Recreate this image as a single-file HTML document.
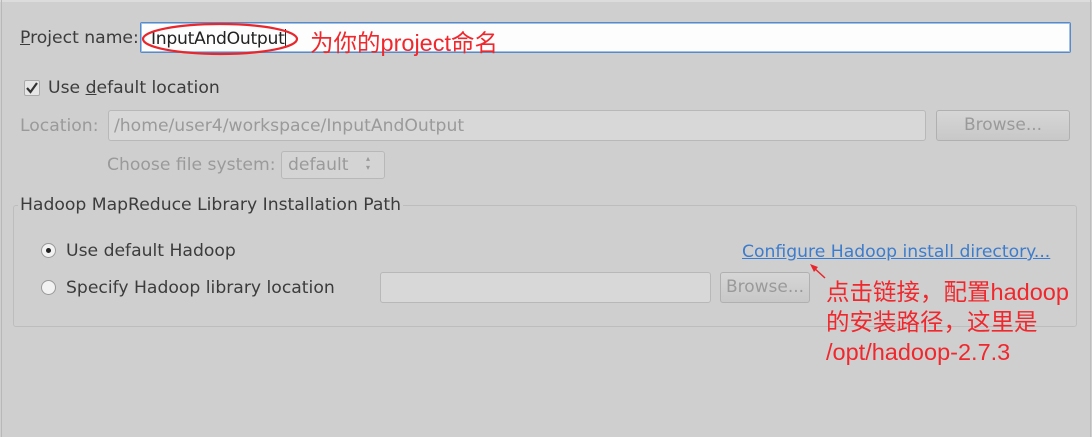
<!DOCTYPE html>
<html><head><meta charset="utf-8"><style>
*{box-sizing:border-box;margin:0;padding:0}
body{width:1092px;height:437px;background:#cfcfcf;position:relative;overflow:hidden;font-family:"DejaVu Sans","Liberation Sans",sans-serif;font-size:17.2px;color:#3c3c3c}
.a{position:absolute;white-space:nowrap;line-height:20px}
.dis{color:#9a9a9a}
.box{position:absolute;border:1px solid #b8b8b8;border-radius:3px;background:#d8d8d8}
.btn{position:absolute;border:1px solid #b0b0b0;border-radius:3px;background:linear-gradient(#d6d6d6,#c8c8c8);color:#9a9a9a;text-align:center;line-height:29px;font-size:17px}
.red{color:#f0282d;font-family:"Liberation Sans","Noto Sans CJK SC",sans-serif;font-size:23.5px;position:absolute;white-space:nowrap}
</style></head><body>
<div style="position:absolute;left:0;top:0;width:1092px;height:2px;background:#dcdcdc"></div>
<div style="position:absolute;left:1px;top:0;width:1px;height:437px;background:#b8b8b8"></div>
<div style="position:absolute;right:1px;top:0;width:1px;height:437px;background:#bdbdbd"></div>

<div class="a" style="left:20px;top:28px"><u>P</u>roject name:</div>
<div style="position:absolute;left:140px;top:22px;width:931px;height:31px;background:#fdfdfd;border:1px solid #5a8ac6;border-radius:2px;box-shadow:0 0 0 1px #9fc0e8 inset"></div>
<div class="a" style="left:151px;top:29px;color:#222;letter-spacing:-0.3px">InputAndOutput<span style="display:inline-block;width:1px;height:18px;background:#222;vertical-align:-3px"></span></div>
<svg style="position:absolute;left:140px;top:22px" width="162" height="36"><ellipse cx="80" cy="17" rx="77" ry="15" fill="none" stroke="#e8262b" stroke-width="2.2"/></svg>
<div class="red" style="left:310px;top:28px;line-height:30px">为你的project命名</div>

<div style="position:absolute;left:24px;top:80px;width:16px;height:16px;border:1px solid #aaa;border-radius:2px;background:#e6e6e6"></div>
<svg style="position:absolute;left:24px;top:80px" width="16" height="16"><path d="M3 8 L6.5 12 L13 3" fill="none" stroke="#333" stroke-width="2.2"/></svg>
<div class="a" style="left:48px;top:78px">Use <u>d</u>efault location</div>

<div class="a dis" style="left:20px;top:116px">Location:</div>
<div class="box" style="left:108px;top:110px;width:818px;height:31px"></div>
<div class="a dis" style="left:114px;top:116px">/home/user4/workspace/InputAndOutput</div>
<div class="btn" style="left:936px;top:110px;width:134px;height:31px">Browse...</div>

<div class="a dis" style="left:107px;top:155px">Choose file system:</div>
<div class="box" style="left:281px;top:151px;width:104px;height:28px;background:#d4d4d4"></div>
<div class="a dis" style="left:288px;top:155px">default</div>
<div class="a dis" style="left:366px;top:154px;font-size:8px;line-height:9px">▴<br>▾</div>

<div style="position:absolute;left:13px;top:205px;width:1064px;height:122px;border:1px solid #bdbdbd;border-radius:3px"></div>
<div class="a" style="left:18px;top:195px;background:#cfcfcf;padding:0 2px">Hadoop MapReduce Library Installation Path</div>

<div style="position:absolute;left:41px;top:243px;width:15px;height:15px;border:1px solid #999;border-radius:50%;background:#f2f2f2"></div>
<div style="position:absolute;left:46px;top:248px;width:5px;height:5px;border-radius:50%;background:#222"></div>
<div class="a" style="left:66px;top:241px">Use default Hadoop</div>
<div style="position:absolute;left:41px;top:280px;width:15px;height:15px;border:1px solid #999;border-radius:50%;background:#f2f2f2"></div>
<div class="a" style="left:66px;top:278px">Specify Hadoop library location</div>
<div class="box" style="left:380px;top:272px;width:331px;height:31px"></div>
<div class="btn" style="left:720px;top:272px;width:90px;height:31px">Browse...</div>

<div class="a" style="left:742px;top:242px;color:#3d7ccc;text-decoration:underline">Configure Hadoop install directory...</div>
<svg style="position:absolute;left:805px;top:262px" width="24" height="20"><path d="M20 16 L8 5" stroke="#e8262b" stroke-width="1.5"/><path d="M5 2 L13 5 L9 10 Z" fill="#e8262b"/></svg>
<div class="red" style="left:826px;top:277px;line-height:30px">点击链接，配置hadoop<br>的安装路径，这里是<br>/opt/hadoop-2.7.3</div>
</body></html>
